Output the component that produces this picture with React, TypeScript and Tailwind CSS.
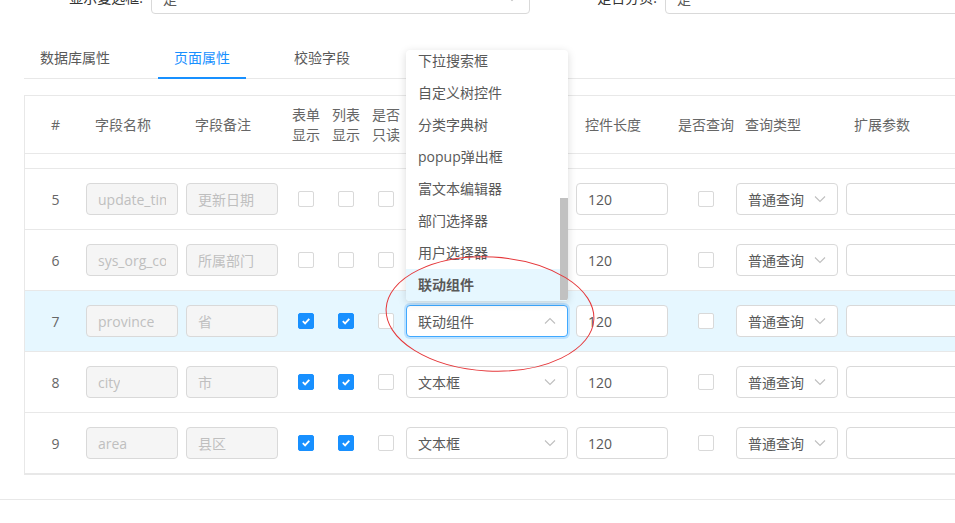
import React from "react";

type Row = {
  no: number;
  name: string;
  remark: string;
  form: boolean;
  list: boolean;
  widget: string;
};

const ROWS: Row[] = [
  { no: 5, name: "update_time", remark: "更新日期", form: false, list: false, widget: "文本框" },
  { no: 6, name: "sys_org_code", remark: "所属部门", form: false, list: false, widget: "文本框" },
  { no: 7, name: "province", remark: "省", form: true, list: true, widget: "联动组件" },
  { no: 8, name: "city", remark: "市", form: true, list: true, widget: "文本框" },
  { no: 9, name: "area", remark: "县区", form: true, list: true, widget: "文本框" },
];

const OPTIONS = [
  "下拉搜索框",
  "自定义树控件",
  "分类字典树",
  "popup弹出框",
  "富文本编辑器",
  "部门选择器",
  "用户选择器",
  "联动组件",
];

function Chevron({ up }: { up?: boolean }) {
  return (
    <svg width="12" height="12" viewBox="0 0 12 12" className="shrink-0">
      <polyline
        points={up ? "1,8.5 6,3.5 11,8.5" : "1,3.5 6,8.5 11,3.5"}
        fill="none"
        stroke="#bfbfbf"
        strokeWidth="1.1"
      />
    </svg>
  );
}

function Checkbox({ checked }: { checked?: boolean }) {
  if (checked) {
    return (
      <span className="flex h-[16px] w-[16px] items-center justify-center rounded-[2px] border border-[#1890ff] bg-[#1890ff]">
        <svg width="10" height="10" viewBox="0 0 10 10">
          <polyline points="1.8,5.2 4.1,7.4 8.3,2.8" fill="none" stroke="#fff" strokeWidth="1.8" />
        </svg>
      </span>
    );
  }
  return <span className="block h-[16px] w-[16px] rounded-[2px] border border-[#d9d9d9] bg-white" />;
}

function Field({ value, disabled, className }: { value: string; disabled?: boolean; className: string }) {
  return (
    <div
      className={`flex h-[32px] items-center rounded-[4px] border border-[#d9d9d9] px-[11px] ${
        disabled ? "bg-[#f5f5f5] text-[#bfbfbf]" : "bg-white text-[#595959]"
      } ${className}`}
    >
      <div className="overflow-hidden whitespace-nowrap">{value}</div>
    </div>
  );
}

function Select({ value, className, open }: { value: string; className: string; open?: boolean }) {
  return (
    <div
      className={`flex h-[32px] items-center justify-between rounded-[4px] border bg-white pl-[11px] pr-[11px] text-[#595959] ${
        open ? "border-[#40a9ff] shadow-[0_0_0_2px_rgba(24,144,255,0.2)]" : "border-[#d9d9d9]"
      } ${className}`}
    >
      <span className="whitespace-nowrap">{value}</span>
      <Chevron up={open} />
    </div>
  );
}

export default function App() {
  return (
    <div className="relative h-[523px] w-[955px] overflow-hidden bg-white font-['Open_Sans','Noto_Sans_CJK_SC',sans-serif] text-[14px] text-[#595959]">
      <div className="w-[1200px] pl-[24px]">
        {/* form row, mostly scrolled off */}
        <div className="-mt-[18px] flex h-[32px] items-center">
          <div className="w-[127px] pr-[8px] text-right leading-[32px] text-[#333]">显示复选框:</div>
          <Select value="是" className="w-[379px]" />
          <div className="w-[135px] pr-[8px] text-right leading-[32px] text-[#333]">是否分页:</div>
          <Select value="是" className="w-[380px]" />
        </div>

        {/* tabs */}
        <div className="mt-[24px] flex border-b border-[#e8e8e8]">
          {["数据库属性", "页面属性", "校验字段"].map((t, i) => (
            <div
              key={t}
              className={`relative mr-[32px] px-[16px] py-[10px] leading-[20px] ${
                i === 1 ? "text-[#1890ff]" : "text-[#595959]"
              }`}
            >
              {t}
              {i === 1 && <div className="absolute -bottom-px left-0 h-[2px] w-full bg-[#1890ff]" />}
            </div>
          ))}
        </div>

        {/* table */}
        <div className="mt-[16px] border border-r-0 border-[#e8e8e8]">
          <div className="flex h-[58px] items-center border-b border-[#e8e8e8] leading-[20px] text-[#666]">
            <div className="w-[61px] text-center">#</div>
            <div className="w-[92px] pl-[9px]">字段名称</div>
            <div className="ml-[8px] w-[92px] pl-[9px]">字段备注</div>
            <div className="ml-[8px] w-[40px] text-center">表单<br />显示</div>
            <div className="w-[40px] text-center">列表<br />显示</div>
            <div className="w-[40px] text-center">是否<br />只读</div>
            <div className="w-[162px] pl-[9px]">控件类型</div>
            <div className="ml-[8px] w-[92px] pl-[9px]">控件长度</div>
            <div className="ml-[8px] w-[60px] text-center whitespace-nowrap">是否查询</div>
            <div className="w-[102px] pl-[9px]">查询类型</div>
            <div className="ml-[8px] w-[200px] pl-[8px]">扩展参数</div>
          </div>
          <div className="h-[15px] border-b border-[#e8e8e8]" />
          {ROWS.map((r) => {
            const active = r.no === 7;
            return (
              <div
                key={r.no}
                className={`flex h-[61px] items-center border-b border-[#e8e8e8] ${active ? "bg-[#e6f7ff]" : "bg-white"}`}
              >
                <div className="w-[61px] text-center text-[#666]">{r.no}</div>
                <Field value={r.name} disabled className="w-[92px]" />
                <Field value={r.remark} disabled className="ml-[8px] w-[92px]" />
                <div className="ml-[8px] flex w-[40px] justify-center">
                  <Checkbox checked={r.form} />
                </div>
                <div className="flex w-[40px] justify-center">
                  <Checkbox checked={r.list} />
                </div>
                <div className="flex w-[40px] justify-center">
                  <Checkbox />
                </div>
                <Select value={r.widget} open={active} className="w-[162px]" />
                <Field value="120" className="ml-[8px] w-[92px]" />
                <div className="ml-[8px] flex w-[60px] justify-center">
                  <Checkbox />
                </div>
                <Select value="普通查询" className="w-[102px]" />
                <Field value="" className="ml-[8px] w-[200px]" />
              </div>
            );
          })}
        </div>
      </div>

      <div className="mt-[24px] border-t border-[#e8e8e8]" />

      {/* open dropdown of 控件类型 */}
      <div className="absolute left-[406px] top-[50px] h-[251px] w-[162px] overflow-hidden rounded-[4px] bg-white shadow-[0_2px_8px_rgba(0,0,0,0.15)]">
        <div className="flex h-full flex-col justify-end">
          {OPTIONS.map((o) => {
            const sel = o === "联动组件";
            return (
              <div
                key={o}
                className={`h-[32px] shrink-0 whitespace-nowrap px-[12px] leading-[32px] ${
                  sel ? "bg-[#e6f7ff] font-semibold text-[#595959]" : "text-[#595959]"
                }`}
              >
                {o}
              </div>
            );
          })}
        </div>
        <div className="absolute right-0 top-[148px] h-[102px] w-[8px] bg-[#c1c1c1]" />
      </div>

      {/* hand-drawn annotation */}
      <svg className="pointer-events-none absolute left-[380px] top-[250px]" width="230" height="130" viewBox="0 0 230 130">
        <ellipse cx="110" cy="64" rx="104" ry="57" fill="none" stroke="#e5383b" strokeWidth="1" transform="rotate(3 110 64)" />
      </svg>
    </div>
  );
}
